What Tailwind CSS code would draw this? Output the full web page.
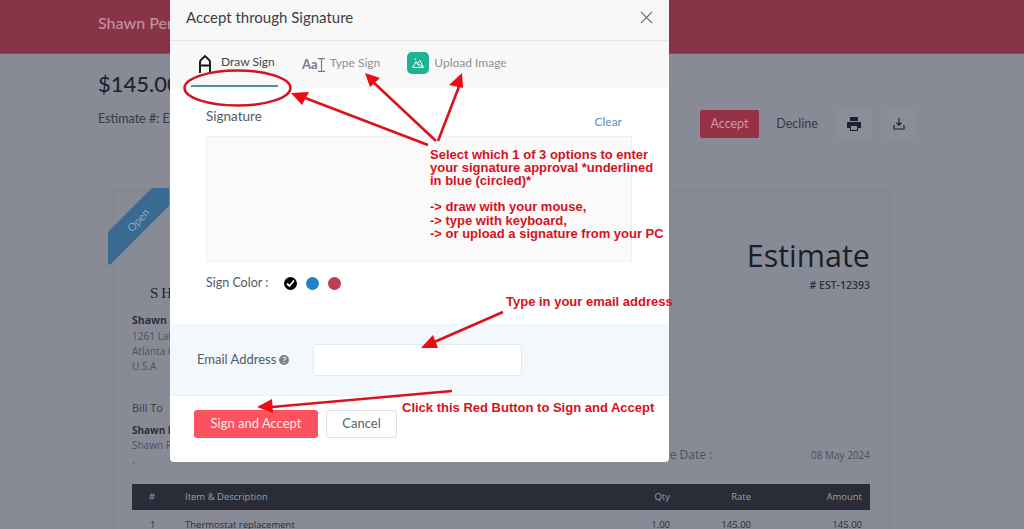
<!DOCTYPE html>
<html lang="en">
<head>
<meta charset="utf-8">
<title>Accept through Signature</title>
<script src="https://cdn.jsdelivr.net/npm/@tailwindcss/browser@4"></script>
</head>
<body class="w-[1024px] h-[529px] overflow-hidden relative bg-[#888b95] font-['Open_Sans',sans-serif] text-[#2b2f3c]">
<!-- page behind the overlay -->
<header class="h-[54px] bg-[#873448] flex items-center pl-[98px] pb-[8px] border-b border-[#82525f]">
  <span class="w-[72px] overflow-hidden whitespace-nowrap text-[16px] font-semibold text-[#bd8d98] font-['Lato',sans-serif]">Shawn Penn</span>
</header>
<main class="px-[98px] h-[475px] overflow-hidden">
  <div class="flex justify-between h-[137px] border-b border-[#848791]">
    <div class="pt-[16px]">
      <div class="w-[72px] overflow-hidden whitespace-nowrap text-[22px] leading-[28px] text-[#20242f] font-['Lato',sans-serif] font-medium">$145.00</div>
      <div class="w-[72px] overflow-hidden whitespace-nowrap mt-[12px] text-[12.500px] leading-[18px] text-[#353945] font-['Lato',sans-serif]">Estimate #: EST-12393</div>
    </div>
    <div class="flex items-start pt-[56px] mr-[9px]">
      <div class="w-[59px] h-[28px] rounded-[2px] bg-[#953046] text-[#c89aa5] text-[12.500px] flex items-center justify-center font-['Lato',sans-serif]">Accept</div>
      <div class="ml-[9px] w-[58px] h-[28px] text-[#353945] text-[12.500px] flex items-center justify-center font-['Lato',sans-serif]">Decline</div>
      <div class="ml-[10px] w-[36px] h-[28px] bg-[#8b8e98] flex items-center justify-center">
        <svg class="w-[14px] h-[14px]" viewBox="0 0 14 14"><path fill="#1d2130" d="M3 0h8v4H3zM1 5h12a1 1 0 0 1 1 1v5h-3v3H3v-3H0V6a1 1 0 0 1 1-1zm3 4v4h6V9z"/></svg>
      </div>
      <div class="ml-[9px] w-[36px] h-[28px] bg-[#8b8e98] flex items-center justify-center">
        <svg class="w-[12px] h-[12px]" viewBox="0 0 12 12" fill="none" stroke="#1d2130" stroke-width="1.200"><path d="M6 0v7M3.500 4.800 6 7.200l2.500-2.400M1 7v4h10V7"/></svg>
      </div>
    </div>
  </div>
  <section class="relative mt-[-1px] ml-[15px] w-[777px] h-[400px] border border-[#80838d] pl-[18px] pr-[19px]">
    <div class="absolute left-[-6px] top-[-3px] w-[61px] h-[77px] bg-[#386a92] [clip-path:polygon(72%_0,100%_0,100%_23%,3%_100%,0_98%,0_57%)]"></div>
    <div class="absolute left-[11px] top-[21px] text-[11px] text-[#8fa9bf] -rotate-[48deg] font-['Lato',sans-serif]">Open</div>
    <div class="flex justify-between pt-[46px]">
      <div class="pt-[46px] w-[300px]">
        <div class="pl-[18px] text-[15px] leading-[20px] tracking-[3px] text-[#20242f] font-['Liberation_Serif',serif]">SHAWN</div>
        <div class="mt-[10px] text-[10.500px] leading-[15px] font-bold text-[#2b2f3c]">Shawn Penn</div>
        <div class="mt-[1px] text-[10px] leading-[15px] text-[#4d515d]">1261 Lake Street<br>Atlanta GA<br>U.S.A</div>
        <div class="mt-[26px] text-[11px] leading-[16px] text-[#353945]">Bill To</div>
        <div class="mt-[7px] text-[10px] leading-[15px] font-bold text-[#2b2f3c]">Shawn Penn</div>
        <div class="text-[10px] leading-[15px] text-[#4d515d]">Shawn Penn<br>.</div>
      </div>
      <div class="text-right">
        <div class="mt-[-2px] text-[30.500px] leading-[40px] text-[#1c1f2b]">Estimate</div>
        <div class="mt-[2px] text-[10.500px] leading-[16px] font-semibold text-[#2b2f3c]">#&nbsp;EST-12393</div>
        <div class="mt-[154px] flex justify-between w-[242px] text-[10px] leading-[16px] text-[#4d515d] ml-auto">
          <span class="text-[12px]">Estimate Date :</span><span>08 May 2024</span>
        </div>
      </div>
    </div>
    <div class="mt-[16px] h-[26px] bg-[#2a2c38] text-[#9a9da7] text-[9.500px] flex items-center">
      <span class="w-[53px] pl-[17px]">#</span>
      <span class="flex-1">Item &amp; Description</span>
      <span class="w-[50px] text-right">Qty</span>
      <span class="w-[81px] text-right">Rate</span>
      <span class="w-[119px] pr-[8px] text-right">Amount</span>
    </div>
    <div class="h-[31px] text-[#2b2f3c] text-[9.500px] flex items-center">
      <span class="w-[53px] pl-[18px]">1</span>
      <span class="flex-1">Thermostat replacement</span>
      <span class="w-[50px] text-right">1.00</span>
      <span class="w-[81px] text-right">145.00</span>
      <span class="w-[119px] pr-[8px] text-right">145.00</span>
    </div>
  </section>
</main>

<!-- modal -->
<div class="absolute left-[170px] top-0 w-[499px] h-[462px] bg-white rounded-b-[4px] flex flex-col font-['Lato',sans-serif] text-[#525a66]">
  <div class="h-[41px] shrink-0 bg-[#f7f7f7] border-b border-[#e7e7e7] flex items-center justify-between pl-[16px] pr-[16px] pb-[5px]">
    <h1 class="text-[15px] text-[#3a3f47]">Accept through Signature</h1>
    <svg class="w-[13px] h-[13px]" viewBox="0 0 13 13" fill="none" stroke="#6d727a" stroke-width="1.100"><path d="M1 1l11 11M12 1 1 12"/></svg>
  </div>
  <div class="h-[47px] shrink-0 bg-[#f8f8f8] flex items-start pl-[21px] text-[12px]">
    <div class="relative w-[87px] h-[46px] flex items-center gap-[10px] pl-[8px] pb-[2px] border-b-2 border-[#4d8fb0] text-[#3f4550]">
      <svg class="w-[12px] h-[18px] mt-[4px]" viewBox="0 0 12 18" fill="none" stroke="#111" stroke-width="1.900"><path d="M1 18V7C1 4.500 4.500 3 6 1c1.500 2 5 3.500 5 6v11M1 10.500h10"/></svg>
      <span>Draw Sign</span>
    </div>
    <div class="ml-[24px] h-[46px] flex items-center gap-[5px] pb-[2px] text-[#8b9099]">
      <span class="flex items-center text-[13px] font-bold leading-none text-[#767b84] pt-[3px]">Aa<svg class="w-[7px] h-[14px]" viewBox="0 0 7 14" fill="none" stroke="#767b84" stroke-width="1.200"><path d="M0 .7h7M3.500.7v12.600M0 13.300h7"/></svg></span>
      <span>Type Sign</span>
    </div>
    <div class="ml-[27px] h-[46px] flex items-center gap-[5px] pb-[2px] text-[#8b9099]">
      <span class="w-[22px] h-[22px] rounded-[5px] bg-[#1fb394] flex items-center justify-center">
        <svg class="w-[12px] h-[10px]" viewBox="0 0 12 10" fill="none" stroke="#fff" stroke-width="1"><path d="M.6 9.400 4 3.500l2.500 4M5.500 5.500 8 2.500l3.400 6.900zM.6 9.400h10.800"/><circle cx="3.500" cy="1" r=".7" fill="#fff" stroke="none"/></svg>
      </span>
      <span>Upload Image</span>
    </div>
  </div>
  <div class="relative h-[236px] shrink-0 pl-[36px] pr-[37px]">
    <div class="flex justify-between items-start pt-[20px]">
      <span class="text-[13.500px] leading-[17px]">Signature</span>
      <span class="mt-[7px] mr-[10px] text-[12px] leading-[14px] text-[#5b8fc0]">Clear</span>
    </div>
    <div class="mt-[7px] h-[126px] bg-[#fafafa] border border-[#f0f0f0]"></div>
    <div class="flex items-center mt-[12px] h-[18px]">
      <span class="text-[12.500px] w-[78px]">Sign Color :</span>
      <span class="w-[13px] h-[13px] rounded-full bg-black flex items-center justify-center">
        <svg class="w-[9px] h-[9px]" viewBox="0 0 9 9" fill="none" stroke="#fff" stroke-width="1.800"><path d="M1 4.500 3.500 7 8 1.500"/></svg>
      </span>
      <span class="ml-[9px] w-[13px] h-[13px] rounded-full bg-[#2284c6]"></span>
      <span class="ml-[9px] w-[13px] h-[13px] rounded-full bg-[#c23a55]"></span>
    </div>
  </div>
  <div class="h-[72px] shrink-0 bg-[#f2f8fb] border-b border-[#eaeff2] flex items-center pl-[27px]">
    <span class="text-[13px] w-[116px] flex items-center gap-[3px]">Email Address
      <span class="w-[10px] h-[10px] rounded-full bg-[#7d8288] text-white text-[8px] font-bold leading-none flex items-center justify-center">?</span>
    </span>
    <div class="w-[209px] h-[32px] bg-white border border-[#e6eaed] rounded-[3px]"></div>
  </div>
  <div class="flex pl-[24px] pt-[14px] gap-[8px] text-[13px]">
    <div class="w-[124px] h-[28px] bg-[#fb5260] text-[#ffe9ea] rounded-[3px] flex items-center justify-center">Sign and Accept</div>
    <div class="w-[71px] h-[28px] bg-white border border-[#dfe1e4] text-[#5c626c] rounded-[3px] flex items-center justify-center">Cancel</div>
  </div>
</div>

<!-- annotation layer -->
<svg class="absolute left-0 top-0 w-[1024px] h-[529px] pointer-events-none" viewBox="0 0 1024 529" fill="none">
  <ellipse cx="237.500" cy="88" rx="53" ry="17.500" stroke="#d01420" stroke-width="2.500"/>
  <g stroke="#d8141e" stroke-width="2.600">
    <path d="M428 145 300 96"/>
    <path d="M436 141 372 81"/>
    <path d="M438 141 460 84"/>
    <path d="M503 312 432 343"/>
    <path d="M452 391 272 407"/>
  </g>
  <g fill="#ec0c14">
    <path d="M291 93 309 92 302 105z"/>
    <path d="M365 73 380 78 370 87z"/>
    <path d="M462 73 463 88 449 85z"/>
    <path d="M421 348 433 335 438 348z"/>
    <path d="M257 407 272 399 273 413z"/>
  </g>
</svg>
<div class="absolute left-[430px] top-[147.500px] text-[13px] leading-[13.200px] font-bold text-[#d5121d] font-['Liberation_Sans',sans-serif] whitespace-pre">Select which 1 of 3 options to enter
your signature approval *underlined
in blue (circled)*

-&gt; draw with your mouse,
-&gt; type with keyboard,
-&gt; or upload a signature from your PC</div>
<div class="absolute left-[506px] top-[295px] text-[13px] leading-[14px] font-bold text-[#d5121d] font-['Liberation_Sans',sans-serif]">Type in your email address</div>
<div class="absolute left-[402px] top-[401px] text-[13px] leading-[14px] font-bold text-[#d5121d] font-['Liberation_Sans',sans-serif]">Click this Red Button to Sign and Accept</div>
</body>
</html>
